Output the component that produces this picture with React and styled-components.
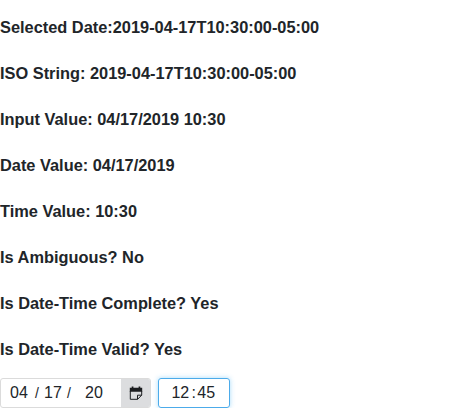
import React from 'react';
import styled, { createGlobalStyle } from 'styled-components';

const GlobalStyle = createGlobalStyle`
  *, *::before, *::after { box-sizing: border-box; }
  body { margin: 0; background: #fff; color: #212529; font-family: "Liberation Sans", Arial, sans-serif; font-size: 16px; }
`;
const Page = styled.main`
  padding-top: 15px;
`;
const Line = styled.h3`
  margin: 0 0 22px;
  font-size: 16.38px;
  font-weight: 700;
  line-height: 24px;
  white-space: pre;
`;
const Controls = styled.div`
  display: flex;
  margin-top: -5px;
`;
const Field = styled.div`
  display: flex;
  align-items: center;
  height: 30px;
  width: ${(p) => p.$width}px;
  border: 1px solid ${(p) => (p.$focused ? '#4cabea' : '#dbdbdb')};
  border-radius: 3px;
  box-shadow: ${(p) => (p.$focused ? '0 0 5px rgba(60,175,245,.45)' : 'none')};
  margin-left: ${(p) => p.$gap || 0}px;
`;
const Part = styled.span`
  width: ${(p) => p.$width}px;
  padding-left: ${(p) => p.$inset || 0}px;
`;
const Slash = styled(Part)`
  font-size: 14px;
`;
const CalendarButton = styled.button`
  display: flex;
  align-items: center;
  justify-content: center;
  width: 29px;
  height: 28px;
  margin-left: auto;
  padding: 0;
  border: 0;
  border-radius: 0 2px 2px 0;
  background: #dcdddf;
  color: #1c1e20;
`;

const lines = [
  'Selected Date:2019-04-17T10:30:00-05:00',
  'ISO String: 2019-04-17T10:30:00-05:00',
  'Input Value: 04/17/2019 10:30',
  'Date Value: 04/17/2019',
  'Time Value: 10:30',
  'Is Ambiguous? No',
  'Is Date-Time Complete? Yes',
  'Is Date-Time Valid? Yes',
];

const CalendarIcon = () => (
  <svg width="14" height="14" viewBox="0 0 14 14">
    <path fill="currentColor" d="M.8 1.7H2.7V.4h1.7v1.3h5.2V.4h1.7v1.3h1.9V5.8H.8z" />
    <path fill="none" stroke="currentColor" d="M1.3 5v8.3h7.3l4.1-4.1V5M8.5 13.3V9.2h4.2" />
  </svg>
);

export default function App() {
  return (
    <Page>
      <GlobalStyle />
      {lines.map((l) => <Line key={l}>{l}</Line>)}
      <Controls>
        <Field $width={151}>
          <Part $width={34} $inset={9}>04</Part>
          <Slash $width={9}>/</Slash>
          <Part $width={23}>17</Part>
          <Slash $width={18}>/</Slash>
          <Part $width={20}>20</Part>
          <CalendarButton aria-label="Choose date">
            <CalendarIcon />
          </CalendarButton>
        </Field>
        <Field $width={72} $gap={7} $focused>
          <Part $width={32.5} $inset={12.4}>12</Part>
          <Part $width={5.8}>:</Part>
          <Part $width={20}>45</Part>
        </Field>
      </Controls>
    </Page>
  );
}
